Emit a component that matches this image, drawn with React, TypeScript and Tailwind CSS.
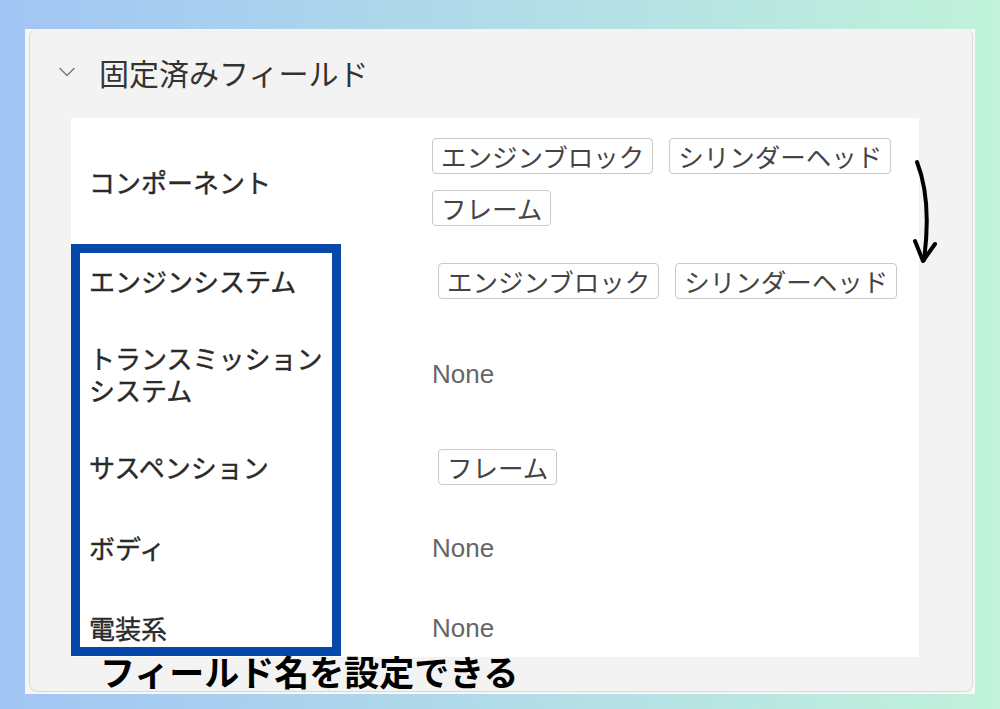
import { ReactNode } from 'react';

type FieldRow = {
  label: string;
  tags: string[];
  rowClass: string;
  inset?: boolean;
};

const rows: FieldRow[] = [
  { label: 'コンポーネント', tags: ['エンジンブロック', 'シリンダーヘッド', 'フレーム'], rowClass: 'h-[127px]' },
  { label: 'エンジンシステム', tags: ['エンジンブロック', 'シリンダーヘッド'], rowClass: 'h-[75px] pb-[4px]', inset: true },
  { label: 'トランスミッションシステム', tags: [], rowClass: 'h-[107px]' },
  { label: 'サスペンション', tags: ['フレーム'], rowClass: 'h-[81px] pb-[2px]', inset: true },
  { label: 'ボディ', tags: [], rowClass: 'h-[80px]' },
  { label: '電装系', tags: [], rowClass: 'h-[69px] pt-[10px]' },
];

const jp = "font-['Noto_Sans_CJK_JP','Noto_Sans',sans-serif]";

function Tag({ children }: { children: ReactNode }) {
  return (
    <span className="flex h-[36px] items-center rounded-[4px] border-[1.5px] border-[#c9c9c9] bg-white px-[8px] text-[25.5px] leading-none text-[#444]">
      {children}
    </span>
  );
}

function Chevron() {
  return (
    <svg width="16" height="10" viewBox="0 0 16 10" fill="none">
      <path d="M1 1.5 L8 8.5 L15 1.5" stroke="#7a7a7a" strokeWidth="1.5" strokeLinecap="round" strokeLinejoin="round" />
    </svg>
  );
}

export default function App() {
  return (
    <div className={`relative h-[709px] w-[1000px] overflow-hidden bg-gradient-to-r from-[#a2c5f4] to-[#c1f2da] ${jp}`}>
      <div className="ml-[25px] mt-[29px] h-[665px] w-[950px] bg-[#f7f7f7]">
        <div className="ml-[4px] h-[663px] w-[944px] rounded-[8px] border-x border-b border-[#d9d9d9] bg-[#f3f3f3]">
          {/* section header */}
          <div className="flex h-[89px] items-center gap-[24px] pb-[4px] pl-[29px]">
            <Chevron />
            <h2 className="text-[30px] leading-none font-normal text-[#333]">固定済みフィールド</h2>
          </div>

          {/* field table */}
          <div className="relative ml-[41px] h-[539px] w-[848px] overflow-hidden bg-white pl-[18px]">
            {rows.map((row) => (
              <div key={row.label} className={`grid grid-cols-[343px_1fr] items-center ${row.rowClass}`}>
                <div className="max-w-[248px] text-[26px] leading-[32px] font-normal text-[#2a2a2a] [-webkit-text-stroke:0.4px_#2a2a2a]">
                  {row.label}
                </div>
                {row.tags.length > 0 ? (
                  <div className={`flex flex-wrap gap-[16px] ${row.inset ? 'pl-[6px]' : ''}`}>
                    {row.tags.map((t) => (
                      <Tag key={t}>{t}</Tag>
                    ))}
                  </div>
                ) : (
                  <div className="font-['Liberation_Sans',sans-serif] text-[26px] leading-[32px] text-[#666]">None</div>
                )}
              </div>
            ))}

            {/* highlight around the field names */}
            <div className="pointer-events-none absolute left-0 top-[126px] h-[412px] w-[270px] border-[9px] border-[#0548aa]" />
          </div>
        </div>
      </div>

      {/* hand-drawn arrow */}
      <svg className="absolute left-[900px] top-[150px]" width="50" height="120" viewBox="0 0 50 120" fill="none">
        <path d="M17 12 C26 35, 30 65, 24 110" stroke="#000" strokeWidth="4" strokeLinecap="round" />
        <path d="M15 91 L23 111 L35 94" stroke="#000" strokeWidth="4" strokeLinecap="round" strokeLinejoin="round" />
      </svg>

      <div className="absolute left-[100px] top-[653px] text-[35px] leading-none font-bold text-black">
        フィールド名を設定できる
      </div>
    </div>
  );
}
